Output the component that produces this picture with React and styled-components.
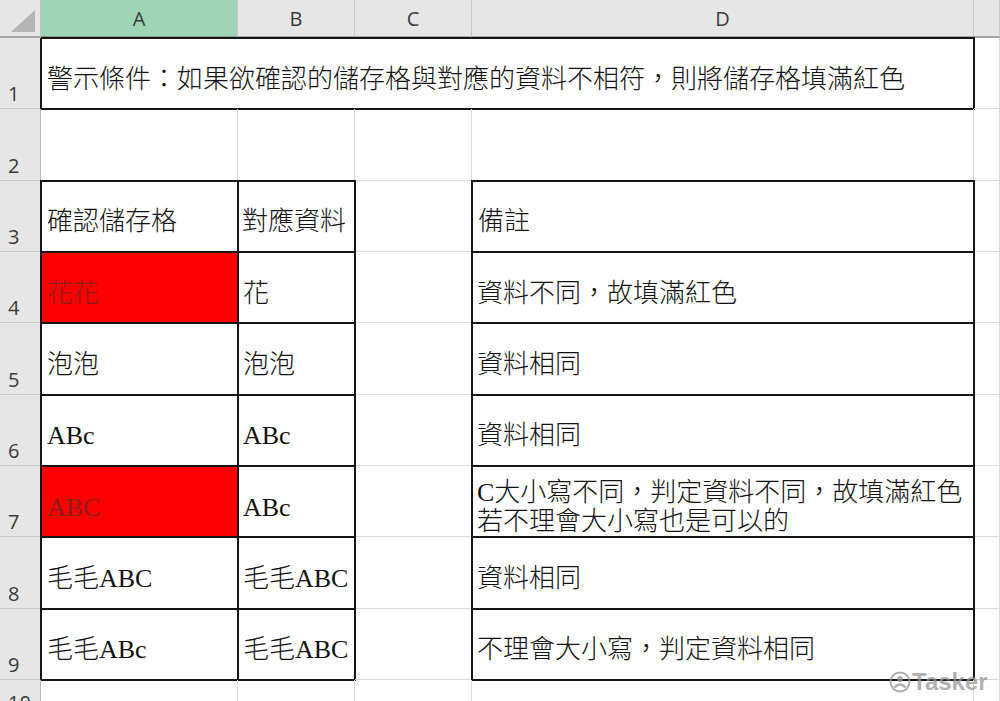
import React from "react";
import styled, { createGlobalStyle } from "styled-components";

const GlobalStyle = createGlobalStyle`
  html, body {
    margin: 0;
    padding: 0;
    background: #fff;
    overflow: hidden;
  }
`;

const Sheet = styled.div`
  position: relative;
  display: grid;
  grid-template-columns: 41px 197px 117px 117px 502px 1fr;
  grid-template-rows: 38px repeat(9, 71.33px) 38px;
  width: 1000px;
  height: 701px;
  overflow: hidden;
  background: #fff;
`;

const Corner = styled.div`
  position: relative;
  background: #e6e6e6;
  border-right: 1px solid #c4c4c4;
  border-bottom: 2px solid #a3a3a3;
  box-sizing: border-box;
`;

const CornerMark = styled.span`
  position: absolute;
  right: 5px;
  bottom: 4px;
  width: 24px;
  height: 22px;
  background: #b4b4b4;
  clip-path: polygon(100% 0, 100% 100%, 0 100%);
`;

const ColHead = styled.div`
  display: flex;
  align-items: center;
  justify-content: center;
  box-sizing: border-box;
  background: ${(p) => (p.$active ? "#9fd5b7" : "#e6e6e6")};
  border-right: 1px solid #c8c8c8;
  border-bottom: 2px solid ${(p) => (p.$active ? "#8a9c92" : "#a3a3a3")};
  font-family: "Open Sans", "Noto Sans", sans-serif;
  font-size: 20px;
  color: #3a3a3a;
  padding-top: 1px;
`;

const RowHead = styled.div`
  display: flex;
  align-items: flex-end;
  box-sizing: border-box;
  background: #e6e6e6;
  border-right: 1px solid #b8b8b8;
  border-bottom: 1px solid #c8c8c8;
  padding: 0 0 2px 8px;
  font-family: "Open Sans", "Noto Sans", sans-serif;
  font-size: 20px;
  line-height: 24px;
  color: #3a3a3a;
`;

const Cell = styled.div`
  display: flex;
  flex-direction: column;
  justify-content: center;
  box-sizing: border-box;
  grid-column: ${(p) => (p.$span ? `span ${p.$span}` : "auto")};
  padding: 12px 0 0 ${(p) => p.$pad || 6}px;
  border-right: 1px solid #dadada;
  border-bottom: 1px solid #dadada;
  background: ${(p) => (p.$fill ? "#ff0000" : "transparent")};
  outline: ${(p) => (p.$box ? "2px solid #151515" : "none")};
  outline-offset: -1px;
  font-family: "Liberation Serif", "Noto Sans CJK TC", serif;
  font-weight: 300;
  font-size: 26px;
  line-height: 29px;
  color: ${(p) => (p.$fill ? "#8c1c1c" : "#111")};
  white-space: nowrap;
`;

const Watermark = styled.div`
  position: absolute;
  left: 889px;
  top: 668px;
  display: flex;
  align-items: center;
  gap: 1px;
  font-family: "Liberation Sans", Arial, sans-serif;
  font-weight: 700;
  font-size: 24px;
  color: rgba(150, 150, 150, 0.75);
  pointer-events: none;
`;

const rows = [
  { a: "花花", b: "花", d: ["資料不同，故填滿紅色"], red: true },
  { a: "泡泡", b: "泡泡", d: ["資料相同"] },
  { a: "ABc", b: "ABc", d: ["資料相同"] },
  { a: "ABC", b: "ABc", d: ["C大小寫不同，判定資料不同，故填滿紅色", "若不理會大小寫也是可以的"], red: true },
  { a: "毛毛ABC", b: "毛毛ABC", d: ["資料相同"] },
  { a: "毛毛ABc", b: "毛毛ABC", d: ["不理會大小寫，判定資料相同"] },
];

function Logo() {
  return (
    <svg width="22" height="22" viewBox="0 0 22 22">
      <circle cx="11" cy="11" r="9.5" fill="none" stroke="rgba(150,150,150,0.75)" strokeWidth="2" />
      <circle cx="11" cy="8" r="3" fill="rgba(150,150,150,0.75)" />
      <path d="M5.5 16.5 Q11 10.5 16.5 16.5" fill="none" stroke="rgba(150,150,150,0.75)" strokeWidth="2.4" />
    </svg>
  );
}

export default function App() {
  return (
    <>
      <GlobalStyle />
      <Sheet>
        <Corner>
          <CornerMark />
        </Corner>
        <ColHead $active>A</ColHead>
        <ColHead>B</ColHead>
        <ColHead>C</ColHead>
        <ColHead>D</ColHead>
        <ColHead />

        <RowHead>1</RowHead>
        <Cell $span={4} $box>
          警示條件：如果欲確認的儲存格與對應的資料不相符，則將儲存格填滿紅色
        </Cell>
        <Cell />

        <RowHead>2</RowHead>
        <Cell />
        <Cell />
        <Cell />
        <Cell />
        <Cell />

        <RowHead>3</RowHead>
        <Cell $box>確認儲存格</Cell>
        <Cell $box $pad={4}>對應資料</Cell>
        <Cell />
        <Cell $box>備註</Cell>
        <Cell />

        {rows.map((r, i) => (
          <React.Fragment key={i}>
            <RowHead>{i + 4}</RowHead>
            <Cell $box $fill={r.red}>{r.a}</Cell>
            <Cell $box $pad={5}>{r.b}</Cell>
            <Cell />
            <Cell $box $pad={5}>
              {r.d.map((line) => (
                <span key={line}>{line}</span>
              ))}
            </Cell>
            <Cell />
          </React.Fragment>
        ))}

        <RowHead>10</RowHead>
        <Cell />
        <Cell />
        <Cell />
        <Cell />
        <Cell />

        <Watermark>
          <Logo />
          Tasker
        </Watermark>
      </Sheet>
    </>
  );
}
